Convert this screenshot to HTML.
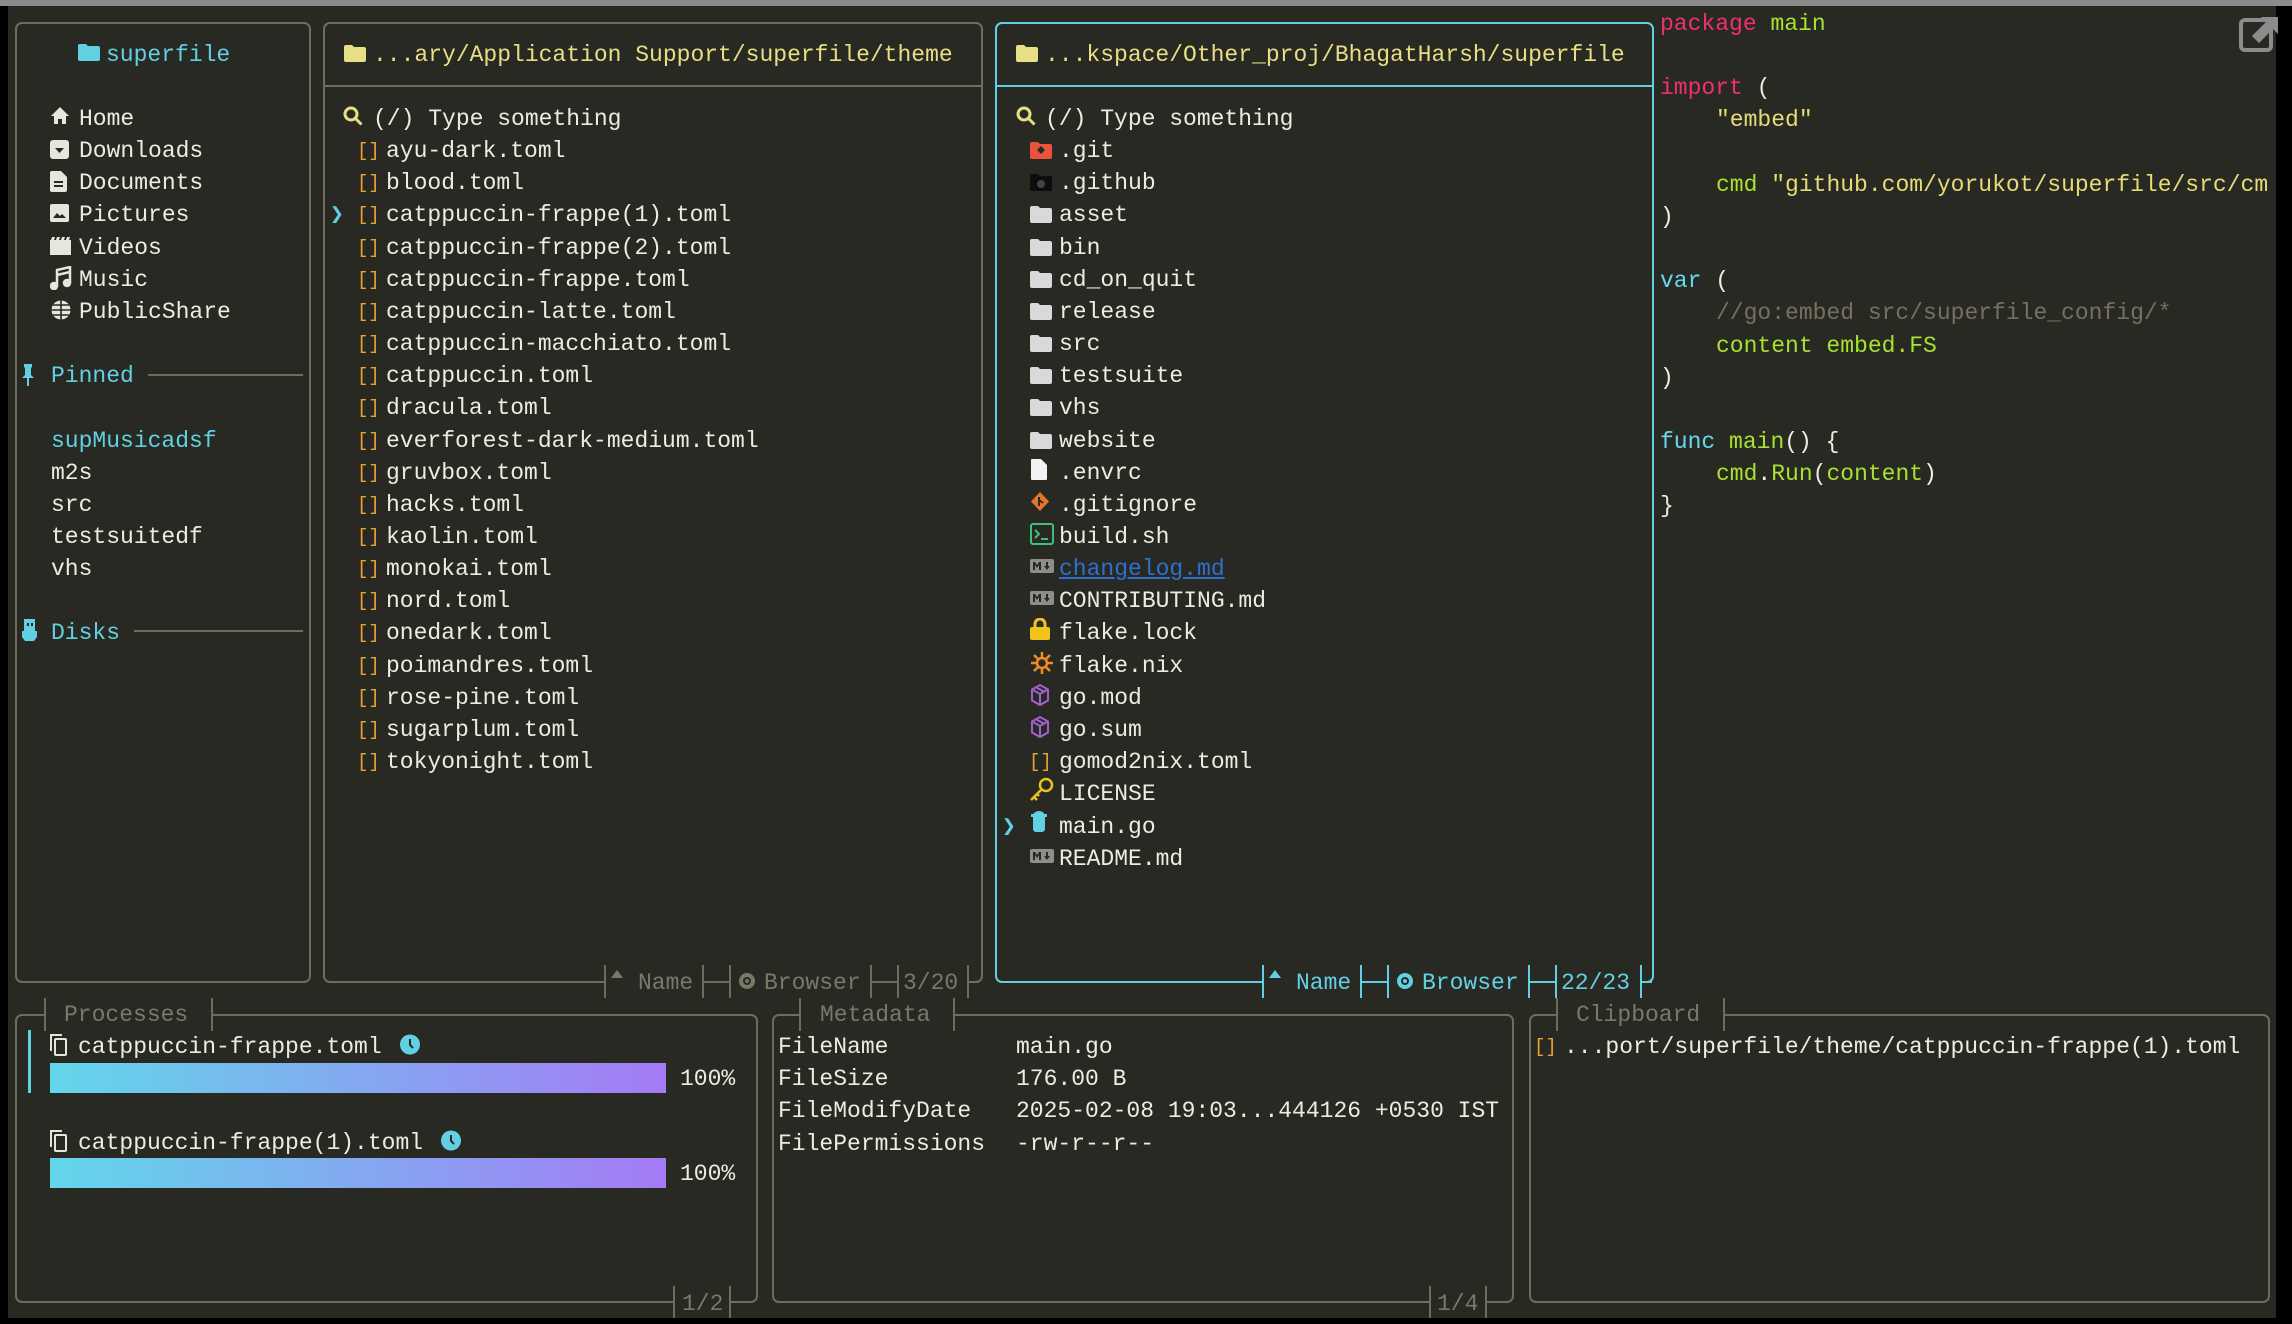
<!DOCTYPE html>
<html><head><meta charset="utf-8"><style>
*{margin:0;padding:0;box-sizing:border-box}
html,body{width:2292px;height:1324px;overflow:hidden;background:#000}
#app{position:absolute;left:8px;top:6px;width:2268px;height:1312px;background:#292924}
#topbar{position:absolute;left:0;top:0;width:2292px;height:6px;background:#8c8c8c}
.a{position:absolute}
.r{position:absolute;height:32px;line-height:32px;white-space:pre;font-family:"Liberation Mono","DejaVu Sans Mono",monospace;font-size:23px;color:#ececE2;transform:translateY(2px)}
.box{position:absolute;border:2px solid #6e6d5c;border-radius:7px}
.cy{color:#62d0e3}.yl{color:#e8df84}.dim{color:#7a7968}.or{color:#e8a232}
.vb{position:absolute;width:2px;background:#6e6d5c}
.hb{position:absolute;height:2px;background:#6e6d5c}
.cvb{position:absolute;width:2px;background:#62d0e3}
.chb{position:absolute;height:2px;background:#62d0e3}
.bg{position:absolute;background:#292924}
.br{color:#e8a232;font-size:19px}
svg{position:absolute}
</style></head><body>
<svg width="0" height="0" style="position:absolute">
<defs>
<symbol id="folder" viewBox="0 0 22 18"><path d="M2 1h6l2 2h10a2 2 0 0 1 2 2v11a2 2 0 0 1-2 2H2a2 2 0 0 1-2-2V3a2 2 0 0 1 2-2z"/></symbol>
<symbol id="md" viewBox="0 0 24 14"><rect x="0" y="0" width="24" height="14" rx="2" fill="#8d8d8d"/><path d="M3 11V3h2l2 3 2-3h2v8H9V6L7 9 5 6v5zM16 3h2v4h2l-3 4-3-4h2z" fill="#292924"/></symbol>
</defs></svg>
<div id="topbar"></div>
<div id="app"></div>

<!-- Sidebar -->
<div class="box" style="left:15px;top:22px;width:296px;height:961px"></div>
<svg style="left:78px;top:43px" width="22" height="18" fill="#62d0e3"><use href="#folder"/></svg>
<div class="r cy" style="left:106px;top:37px">superfile</div>
<svg style="left:50px;top:106px" width="20" height="20" viewBox="0 0 20 20" fill="#e6e6dc"><path d="M10 1 1 10h3v8h4v-5h4v5h4v-8h3z"/></svg>
<div class="r" style="left:79px;top:101px">Home</div>
<svg style="left:50px;top:140px" width="19" height="19" viewBox="0 0 19 19"><rect width="19" height="19" rx="3" fill="#e6e6dc"/><path d="M5 8h9l-4.5 5z" fill="#292924"/></svg>
<div class="r" style="left:79px;top:133px">Downloads</div>
<svg style="left:50px;top:171px" width="17" height="21" viewBox="0 0 17 21"><path d="M0 2a2 2 0 0 1 2-2h9l6 6v13a2 2 0 0 1-2 2H2a2 2 0 0 1-2-2z" fill="#e6e6dc"/><path d="M4 11h9M4 15h9" stroke="#292924" stroke-width="2"/></svg>
<div class="r" style="left:79px;top:165px">Documents</div>
<svg style="left:50px;top:204px" width="19" height="18" viewBox="0 0 19 18"><rect width="19" height="18" rx="2" fill="#e6e6dc"/><path d="M3 14l4-5 3 3 2-2 4 4z" fill="#292924"/></svg>
<div class="r" style="left:79px;top:197px">Pictures</div>
<svg style="left:50px;top:237px" width="21" height="18" viewBox="0 0 21 18"><path d="M0 3h21v15H0z M2 0h3l-1 3H1zM7 0h3l-1 3H6zM12 0h3l-1 3h-3zM17 0h3l-1 3h-3z" fill="#e6e6dc"/></svg>
<div class="r" style="left:79px;top:230px">Videos</div>
<svg style="left:50px;top:266px" width="22" height="24" viewBox="0 0 22 24" fill="none" stroke="#e6e6dc" stroke-width="2.5"><path d="M7 20V4l13-3v16"/><circle cx="4" cy="20" r="3" fill="#e6e6dc"/><circle cx="17" cy="17" r="3" fill="#e6e6dc"/><path d="M7 9l13-3"/></svg>
<div class="r" style="left:79px;top:262px">Music</div>
<svg style="left:50px;top:299px" width="22" height="22" viewBox="0 0 22 22" fill="none" stroke="#e6e6dc" stroke-width="3"><circle cx="11" cy="11" r="9.5" fill="#e6e6dc" stroke="none"/><path d="M1 11h20M11 1v20M3 6h16M3 16h16" stroke="#292924" stroke-width="1.6"/></svg>
<div class="r" style="left:79px;top:294px">PublicShare</div>
<svg style="left:22px;top:364px" width="12" height="22" viewBox="0 0 12 22" fill="#62d0e3"><path d="M2 0h8v3l-1 1v7l3 3H0l3-3V4L2 3zM5 14h2v8H5z"/></svg>
<div class="r cy" style="left:51px;top:358px">Pinned</div>
<div class="hb" style="left:148px;top:374px;width:155px"></div>
<div class="r cy" style="left:51px;top:423px">supMusicadsf</div>
<div class="r" style="left:51px;top:455px">m2s</div>
<div class="r" style="left:51px;top:487px">src</div>
<div class="r" style="left:51px;top:519px">testsuitedf</div>
<div class="r" style="left:51px;top:551px">vhs</div>
<svg style="left:22px;top:619px" width="15" height="22" viewBox="0 0 15 22" fill="#62d0e3"><path d="M2 0h11v14H2z M0 12h15v6l-3 4H3l-3-4z"/><rect x="5" y="4" width="2" height="3" fill="#292924"/><rect x="9" y="4" width="2" height="3" fill="#292924"/></svg>
<div class="r cy" style="left:51px;top:615px">Disks</div>
<div class="hb" style="left:134px;top:630px;width:169px"></div>

<!-- Panel 2 -->
<div class="box" style="left:323px;top:22px;width:660px;height:961px"></div>
<div class="hb" style="left:324px;top:85px;width:658px"></div>
<svg style="left:344px;top:44px" width="22" height="18" fill="#e8df84"><use href="#folder"/></svg>
<div class="r yl" style="left:373px;top:37px">...ary/Application Support/superfile/theme</div>
<svg style="left:343px;top:106px" width="21" height="21" viewBox="0 0 21 21" fill="none" stroke="#e8df84" stroke-width="3"><circle cx="8" cy="8" r="6"/><path d="M12.5 12.5l6 6"/></svg>
<div class="r" style="left:373px;top:101px">(/) Type something</div>
<div class="r cy" style="left:330px;top:197px">❯</div>
<div class="r br" style="left:357px;top:133px">[]</div><div class="r" style="left:386px;top:133px">ayu-dark.toml</div>
<div class="r br" style="left:357px;top:165px">[]</div><div class="r" style="left:386px;top:165px">blood.toml</div>
<div class="r br" style="left:357px;top:197px">[]</div><div class="r" style="left:386px;top:197px">catppuccin-frappe(1).toml</div>
<div class="r br" style="left:357px;top:230px">[]</div><div class="r" style="left:386px;top:230px">catppuccin-frappe(2).toml</div>
<div class="r br" style="left:357px;top:262px">[]</div><div class="r" style="left:386px;top:262px">catppuccin-frappe.toml</div>
<div class="r br" style="left:357px;top:294px">[]</div><div class="r" style="left:386px;top:294px">catppuccin-latte.toml</div>
<div class="r br" style="left:357px;top:326px">[]</div><div class="r" style="left:386px;top:326px">catppuccin-macchiato.toml</div>
<div class="r br" style="left:357px;top:358px">[]</div><div class="r" style="left:386px;top:358px">catppuccin.toml</div>
<div class="r br" style="left:357px;top:390px">[]</div><div class="r" style="left:386px;top:390px">dracula.toml</div>
<div class="r br" style="left:357px;top:423px">[]</div><div class="r" style="left:386px;top:423px">everforest-dark-medium.toml</div>
<div class="r br" style="left:357px;top:455px">[]</div><div class="r" style="left:386px;top:455px">gruvbox.toml</div>
<div class="r br" style="left:357px;top:487px">[]</div><div class="r" style="left:386px;top:487px">hacks.toml</div>
<div class="r br" style="left:357px;top:519px">[]</div><div class="r" style="left:386px;top:519px">kaolin.toml</div>
<div class="r br" style="left:357px;top:551px">[]</div><div class="r" style="left:386px;top:551px">monokai.toml</div>
<div class="r br" style="left:357px;top:583px">[]</div><div class="r" style="left:386px;top:583px">nord.toml</div>
<div class="r br" style="left:357px;top:615px">[]</div><div class="r" style="left:386px;top:615px">onedark.toml</div>
<div class="r br" style="left:357px;top:648px">[]</div><div class="r" style="left:386px;top:648px">poimandres.toml</div>
<div class="r br" style="left:357px;top:680px">[]</div><div class="r" style="left:386px;top:680px">rose-pine.toml</div>
<div class="r br" style="left:357px;top:712px">[]</div><div class="r" style="left:386px;top:712px">sugarplum.toml</div>
<div class="r br" style="left:357px;top:744px">[]</div><div class="r" style="left:386px;top:744px">tokyonight.toml</div>
<!-- footer p2 -->
<div class="bg" style="left:606px;top:978px;width:362px;height:8px"></div>
<div class="vb" style="left:604px;top:965px;height:33px"></div>
<svg style="left:610px;top:969px" width="14" height="10" viewBox="0 0 14 10" fill="#7a7968"><path d="M7 1 13 9H1z"/></svg>
<div class="r dim" style="left:638px;top:965px">Name</div>
<div class="vb" style="left:702px;top:965px;height:33px"></div><div class="hb" style="left:702px;top:981px;width:28px"></div><div class="vb" style="left:729px;top:965px;height:33px"></div>
<svg style="left:737px;top:972px" width="20" height="18" viewBox="0 0 20 18"><circle cx="10" cy="9" r="8" fill="#7a7968"/><circle cx="10" cy="9" r="4" fill="#292924"/><circle cx="10" cy="9" r="2" fill="#7a7968"/></svg>
<div class="r dim" style="left:764px;top:965px">Browser</div>
<div class="vb" style="left:870px;top:965px;height:33px"></div><div class="hb" style="left:870px;top:981px;width:28px"></div><div class="vb" style="left:897px;top:965px;height:33px"></div>
<div class="r dim" style="left:903px;top:965px">3/20</div>
<div class="vb" style="left:967px;top:965px;height:33px"></div><div class="hb" style="left:967px;top:981px;width:12px"></div>

<!-- Panel 3 -->
<div class="box" style="left:995px;top:22px;width:659px;height:961px;border-color:#62d0e3"></div>
<div class="chb" style="left:996px;top:85px;width:657px"></div>
<svg style="left:1016px;top:44px" width="22" height="18" fill="#e8df84"><use href="#folder"/></svg>
<div class="r yl" style="left:1045px;top:37px">...kspace/Other_proj/BhagatHarsh/superfile</div>
<svg style="left:1016px;top:106px" width="21" height="21" viewBox="0 0 21 21" fill="none" stroke="#e8df84" stroke-width="3"><circle cx="8" cy="8" r="6"/><path d="M12.5 12.5l6 6"/></svg>
<div class="r" style="left:1045px;top:101px">(/) Type something</div>
<svg style="left:1030px;top:141px" width="22" height="18" viewBox="0 0 22 18"><use href="#folder" fill="#e8533a"/><path d="M11 5l4 4-4 4-4-4z" fill="#292924"/></svg>
<div class="r" style="left:1059px;top:133px">.git</div>
<svg style="left:1030px;top:173px" width="22" height="18" viewBox="0 0 22 18"><use href="#folder" fill="#0d0d0d"/><circle cx="11" cy="11" r="4" fill="#444"/></svg>
<div class="r" style="left:1059px;top:165px">.github</div>
<svg style="left:1030px;top:205px" width="22" height="18" fill="#d9d9d9"><use href="#folder"/></svg><div class="r" style="left:1059px;top:197px">asset</div>
<svg style="left:1030px;top:238px" width="22" height="18" fill="#d9d9d9"><use href="#folder"/></svg><div class="r" style="left:1059px;top:230px">bin</div>
<svg style="left:1030px;top:270px" width="22" height="18" fill="#d9d9d9"><use href="#folder"/></svg><div class="r" style="left:1059px;top:262px">cd_on_quit</div>
<svg style="left:1030px;top:302px" width="22" height="18" fill="#d9d9d9"><use href="#folder"/></svg><div class="r" style="left:1059px;top:294px">release</div>
<svg style="left:1030px;top:334px" width="22" height="18" fill="#d9d9d9"><use href="#folder"/></svg><div class="r" style="left:1059px;top:326px">src</div>
<svg style="left:1030px;top:366px" width="22" height="18" fill="#d9d9d9"><use href="#folder"/></svg><div class="r" style="left:1059px;top:358px">testsuite</div>
<svg style="left:1030px;top:398px" width="22" height="18" fill="#d9d9d9"><use href="#folder"/></svg><div class="r" style="left:1059px;top:390px">vhs</div>
<svg style="left:1030px;top:431px" width="22" height="18" fill="#d9d9d9"><use href="#folder"/></svg><div class="r" style="left:1059px;top:423px">website</div>
<svg style="left:1031px;top:459px" width="16" height="21" viewBox="0 0 16 21"><path d="M0 1a1 1 0 0 1 1-1h9l6 6v14a1 1 0 0 1-1 1H1a1 1 0 0 1-1-1z" fill="#f2f2f2"/></svg><div class="r" style="left:1059px;top:455px">.envrc</div>
<svg style="left:1030px;top:491px" width="20" height="21" viewBox="0 0 20 21"><path d="M10 1l9 9.5-9 9.5-9-9.5z" fill="#e8742a"/><path d="M9 6v9M9 9l4 3" stroke="#292924" stroke-width="2"/></svg><div class="r" style="left:1059px;top:487px">.gitignore</div>
<svg style="left:1030px;top:523px" width="24" height="22" viewBox="0 0 24 22" fill="none" stroke="#3fc07a" stroke-width="2"><rect x="1" y="1" width="22" height="20" rx="2"/><path d="M5 7l4 4-4 4M11 16h7"/></svg><div class="r" style="left:1059px;top:519px">build.sh</div>
<svg style="left:1030px;top:559px" width="24" height="14"><use href="#md"/></svg><div class="r" style="left:1059px;top:551px;color:#2e6fd0;text-decoration:underline">changelog.md</div>
<svg style="left:1030px;top:591px" width="24" height="14"><use href="#md"/></svg><div class="r" style="left:1059px;top:583px">CONTRIBUTING.md</div>
<svg style="left:1030px;top:618px" width="20" height="22" viewBox="0 0 20 22"><path d="M5 10V6a5 5 0 0 1 10 0v4" fill="none" stroke="#f0c419" stroke-width="3"/><rect x="0" y="9" width="20" height="13" rx="2" fill="#f0c419"/></svg><div class="r" style="left:1059px;top:615px">flake.lock</div>
<svg style="left:1030px;top:651px" width="24" height="24" viewBox="0 0 24 24" fill="none" stroke="#f08c20" stroke-width="2.5"><circle cx="12" cy="12" r="5"/><path d="M12 1v6M12 17v6M1 12h6M17 12h6M4 4l4 4M16 16l4 4M20 4l-4 4M8 16l-4 4"/></svg><div class="r" style="left:1059px;top:648px">flake.nix</div>
<svg style="left:1030px;top:684px" width="20" height="22" viewBox="0 0 20 22" fill="none" stroke="#a35ed0" stroke-width="2"><path d="M10 1l8 4.5v11L10 21 2 16.5v-11zM2 5.5l8 4.5 8-4.5M10 10v11M6 3.3l8 4.5"/></svg><div class="r" style="left:1059px;top:680px">go.mod</div>
<svg style="left:1030px;top:716px" width="20" height="22" viewBox="0 0 20 22" fill="none" stroke="#a35ed0" stroke-width="2"><path d="M10 1l8 4.5v11L10 21 2 16.5v-11zM2 5.5l8 4.5 8-4.5M10 10v11M6 3.3l8 4.5"/></svg><div class="r" style="left:1059px;top:712px">go.sum</div>
<div class="r br" style="left:1029px;top:744px">[]</div><div class="r" style="left:1059px;top:744px">gomod2nix.toml</div>
<svg style="left:1029px;top:777px" width="25" height="25" viewBox="0 0 25 25" fill="none" stroke="#e8c020" stroke-width="2.5"><circle cx="17" cy="8" r="6"/><path d="M13 12 2 23M5 20l3 3M8 17l2 2"/></svg><div class="r" style="left:1059px;top:776px">LICENSE</div>
<div class="r cy" style="left:1002px;top:809px">❯</div>
<svg style="left:1030px;top:811px" width="18" height="22" viewBox="0 0 18 22"><path d="M3 5a6 5 0 0 1 12 0v13a3 3 0 0 1-3 3H6a3 3 0 0 1-3-3z M1 3h4v3H1zM13 3h4v3h-4z" fill="#62d0e3"/></svg><div class="r" style="left:1059px;top:809px">main.go</div>
<svg style="left:1030px;top:849px" width="24" height="14"><use href="#md"/></svg><div class="r" style="left:1059px;top:841px">README.md</div>
<!-- footer p3 -->
<div class="bg" style="left:1264px;top:978px;width:382px;height:8px"></div>
<div class="cvb" style="left:1262px;top:965px;height:33px"></div>
<svg style="left:1268px;top:969px" width="14" height="10" viewBox="0 0 14 10" fill="#62d0e3"><path d="M7 1 13 9H1z"/></svg>
<div class="r cy" style="left:1296px;top:965px">Name</div>
<div class="cvb" style="left:1360px;top:965px;height:33px"></div><div class="chb" style="left:1360px;top:981px;width:28px"></div><div class="cvb" style="left:1387px;top:965px;height:33px"></div>
<svg style="left:1395px;top:972px" width="20" height="18" viewBox="0 0 20 18"><circle cx="10" cy="9" r="8" fill="#62d0e3"/><circle cx="10" cy="9" r="4" fill="#292924"/><circle cx="10" cy="9" r="2" fill="#62d0e3"/></svg>
<div class="r cy" style="left:1422px;top:965px">Browser</div>
<div class="cvb" style="left:1528px;top:965px;height:33px"></div><div class="chb" style="left:1528px;top:981px;width:28px"></div><div class="cvb" style="left:1555px;top:965px;height:33px"></div>
<div class="r cy" style="left:1561px;top:965px">22/23</div>
<div class="cvb" style="left:1640px;top:965px;height:33px"></div><div class="chb" style="left:1640px;top:981px;width:12px"></div>

<!-- Preview -->
<div class="r" style="left:1660px;top:6px"><span style="color:#f0306e">package</span> <span style="color:#a6e22e">main</span></div>
<div class="r" style="left:1660px;top:70px"><span style="color:#f0306e">import</span> (</div>
<div class="r" style="left:1716px;top:102px;color:#e6db74">"embed"</div>
<div class="r" style="left:1716px;top:167px"><span style="color:#a6e22e">cmd</span> <span style="color:#e6db74">"github.com/yorukot/superfile/src/cm</span></div>
<div class="r" style="left:1660px;top:199px">)</div>
<div class="r" style="left:1660px;top:263px"><span style="color:#66d9ef">var</span> (</div>
<div class="r" style="left:1716px;top:295px;color:#75715e">//go:embed src/superfile_config/*</div>
<div class="r" style="left:1716px;top:328px;color:#a6e22e">content embed.FS</div>
<div class="r" style="left:1660px;top:360px">)</div>
<div class="r" style="left:1660px;top:424px"><span style="color:#66d9ef">func</span> <span style="color:#a6e22e">main</span>() {</div>
<div class="r" style="left:1716px;top:456px"><span style="color:#a6e22e">cmd</span>.<span style="color:#a6e22e">Run</span>(<span style="color:#a6e22e">content</span>)</div>
<div class="r" style="left:1660px;top:488px">}</div>
<div class="bg" style="left:2276px;top:6px;width:16px;height:1318px;background:#000"></div>
<svg style="left:2238px;top:10px" width="42" height="42" viewBox="0 0 42 42"><rect x="3" y="10" width="30" height="30" rx="4" fill="none" stroke="#8c8c8c" stroke-width="4"/><path d="M14 26 28 12l-5-5h17v17l-5-5-14 14z" fill="#8c8c8c"/></svg>

<!-- Processes -->
<div class="box" style="left:15px;top:1014px;width:743px;height:289px"></div>
<div class="bg" style="left:46px;top:1008px;width:165px;height:12px"></div>
<div class="vb" style="left:44px;top:998px;height:33px"></div><div class="vb" style="left:211px;top:998px;height:33px"></div>
<div class="r dim" style="left:64px;top:997px">Processes</div>
<div class="a" style="left:28px;top:1030px;width:3px;height:63px;background:#62d0e3"></div>
<svg style="left:50px;top:1034px" width="18" height="22" viewBox="0 0 18 22" fill="none" stroke="#e6e6dc" stroke-width="2"><path d="M1 17V1h11"/><rect x="5" y="5" width="11" height="16" rx="1"/></svg>
<div class="r" style="left:78px;top:1029px">catppuccin-frappe.toml</div>
<svg style="left:400px;top:1034px" width="20" height="21" viewBox="0 0 20 21"><circle cx="10" cy="10.5" r="10" fill="#62d0e3"/><path d="M10 5v6l3 3" stroke="#292924" stroke-width="2" fill="none"/></svg>
<div class="a" style="left:50px;top:1063px;width:616px;height:30px;background:linear-gradient(90deg,#62d7ea,#a57af6)"></div>
<div class="r" style="left:680px;top:1061px">100%</div>
<svg style="left:50px;top:1130px" width="18" height="22" viewBox="0 0 18 22" fill="none" stroke="#e6e6dc" stroke-width="2"><path d="M1 17V1h11"/><rect x="5" y="5" width="11" height="16" rx="1"/></svg>
<div class="r" style="left:78px;top:1125px">catppuccin-frappe(1).toml</div>
<svg style="left:441px;top:1130px" width="20" height="21" viewBox="0 0 20 21"><circle cx="10" cy="10.5" r="10" fill="#62d0e3"/><path d="M10 5v6l3 3" stroke="#292924" stroke-width="2" fill="none"/></svg>
<div class="a" style="left:50px;top:1158px;width:616px;height:30px;background:linear-gradient(90deg,#62d7ea,#a57af6)"></div>
<div class="r" style="left:680px;top:1156px">100%</div>
<div class="bg" style="left:675px;top:1296px;width:55px;height:12px"></div>
<div class="vb" style="left:673px;top:1286px;height:32px"></div><div class="vb" style="left:729px;top:1286px;height:32px"></div>
<div class="r dim" style="left:682px;top:1286px">1/2</div>

<!-- Metadata -->
<div class="box" style="left:772px;top:1014px;width:742px;height:289px"></div>
<div class="bg" style="left:801px;top:1008px;width:152px;height:12px"></div>
<div class="vb" style="left:799px;top:998px;height:33px"></div><div class="vb" style="left:953px;top:998px;height:33px"></div>
<div class="r dim" style="left:820px;top:997px">Metadata</div>
<div class="r" style="left:778px;top:1029px">FileName</div><div class="r" style="left:1016px;top:1029px">main.go</div>
<div class="r" style="left:778px;top:1061px">FileSize</div><div class="r" style="left:1016px;top:1061px">176.00 B</div>
<div class="r" style="left:778px;top:1093px">FileModifyDate</div><div class="r" style="left:1016px;top:1093px">2025-02-08 19:03...444126 +0530 IST</div>
<div class="r" style="left:778px;top:1126px">FilePermissions</div><div class="r" style="left:1016px;top:1126px">-rw-r--r--</div>
<div class="bg" style="left:1431px;top:1296px;width:55px;height:12px"></div>
<div class="vb" style="left:1429px;top:1286px;height:32px"></div><div class="vb" style="left:1485px;top:1286px;height:32px"></div>
<div class="r dim" style="left:1437px;top:1286px">1/4</div>

<!-- Clipboard -->
<div class="box" style="left:1529px;top:1014px;width:741px;height:289px"></div>
<div class="bg" style="left:1558px;top:1008px;width:166px;height:12px"></div>
<div class="vb" style="left:1556px;top:998px;height:33px"></div><div class="vb" style="left:1723px;top:998px;height:33px"></div>
<div class="r dim" style="left:1576px;top:997px">Clipboard</div>
<div class="r br" style="left:1534px;top:1029px">[]</div>
<div class="r" style="left:1564px;top:1029px">...port/superfile/theme/catppuccin-frappe(1).toml</div>
</body></html>
